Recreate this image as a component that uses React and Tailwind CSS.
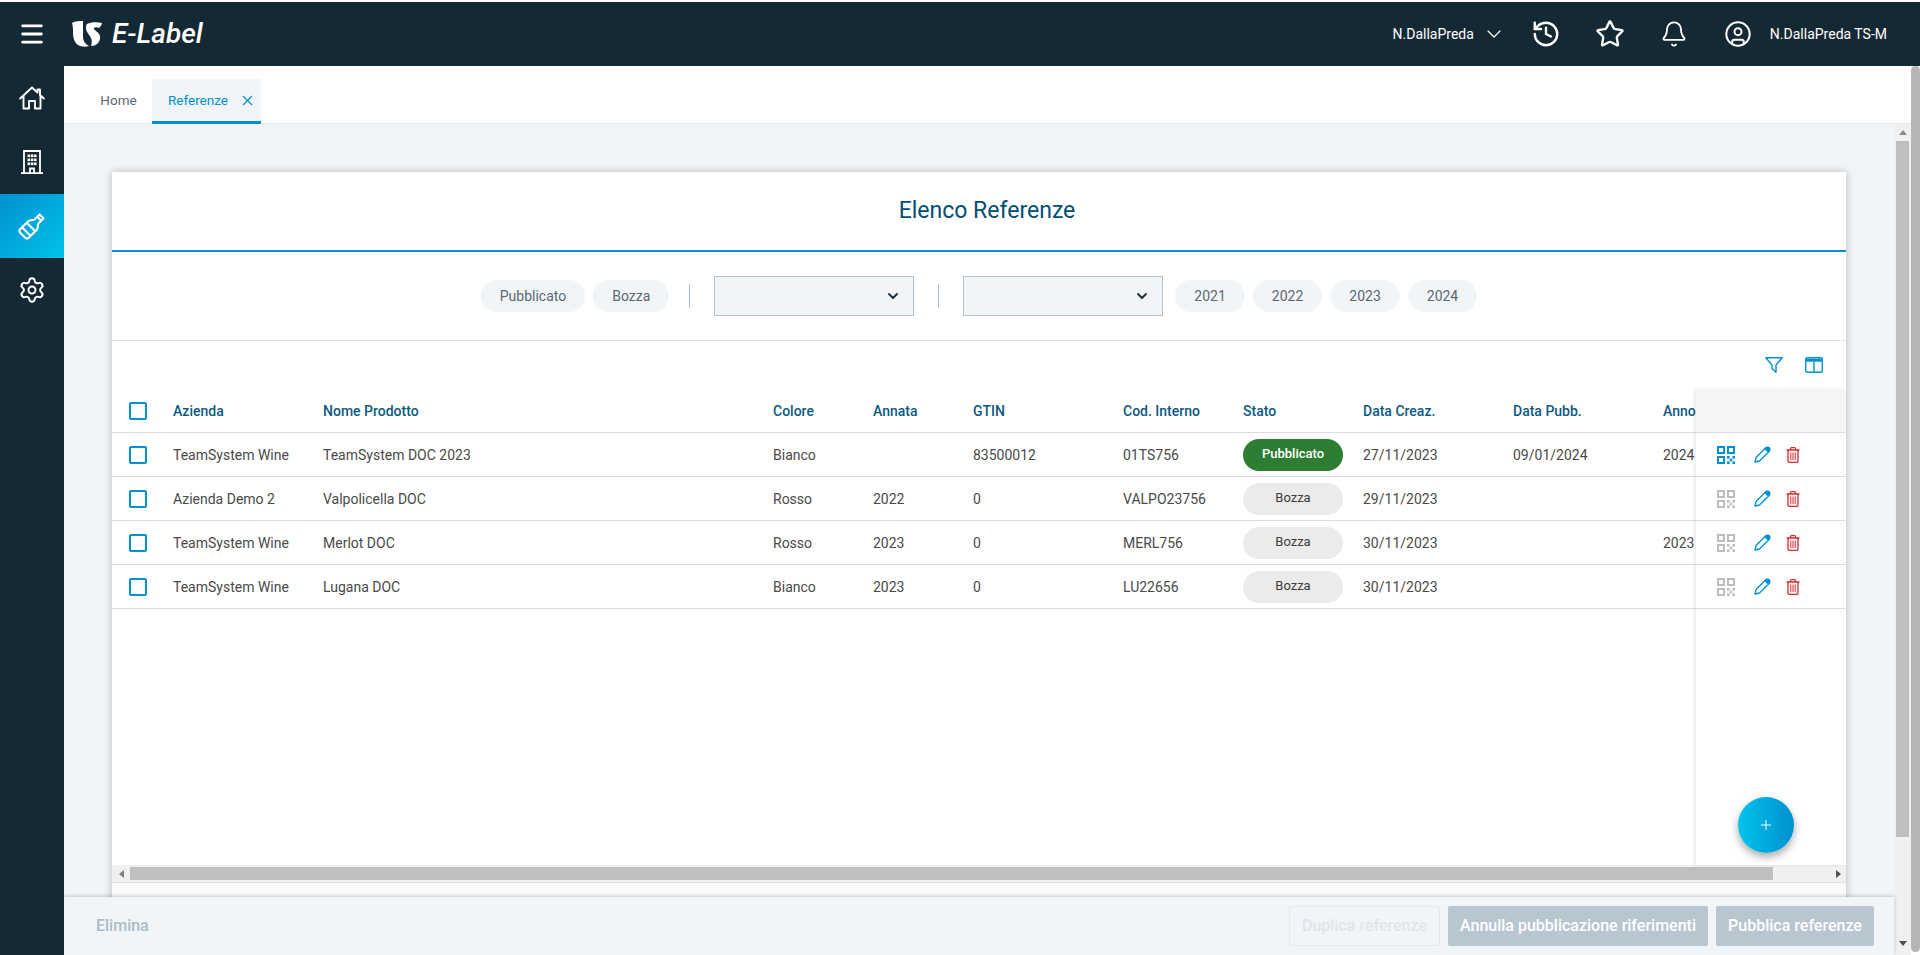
import React from "react";
import { Menu, ChevronDown, History, Star, Bell, CircleUser, X, Plus, Settings } from "lucide-react";

const F = { fontFamily: "Roboto, sans-serif" };

function Logo() {
  return (
    <svg width="30" height="26" viewBox="0 0 30 26" fill="#fff">
      <path d="M0 2 C3 0 8 0 11 0 L11 15 C11 20 13 23 17 25 C14 26 9 26 6 24 C2 21 1 16 1 11 C1 8 1 5 0 2 Z" />
      <path d="M15 3 C19 1 25 1 30 2 C30 4 28 6 27 7 C25 6 23 6 22 7 C21 9 27 11 28 15 C29 20 25 25 19 25 C20 22 20 20 19 17 C17 13 14 11 14 7 C14 5 14 4 15 3 Z" />
    </svg>
  );
}
function HomeIcon() {
  return (
    <svg width="26" height="24" viewBox="0 0 26 24" fill="none" stroke="#fff" strokeWidth="1.9" strokeLinejoin="round" strokeLinecap="round">
      <path d="M1.2 12.5 L13 1.5 L18.5 6.6 V3.5 H21 V9 L24.8 12.5" />
      <path d="M4.5 10 V22.5 H10 V15 H16 V22.5 H21.5 V10" />
    </svg>
  );
}
function BottleIcon() {
  return (
    <svg width="30" height="30" viewBox="0 0 32 32" fill="none" stroke="#fff" strokeWidth="2.2" strokeLinejoin="round">
      <g transform="rotate(45 16 16)">
        <path d="M13 1.5 H19 V9 C19 11 22.5 12 22.5 16 V27 C22.5 29 21.5 30 19.5 30 H12.5 C10.5 30 9.5 29 9.5 27 V16 C9.5 12 13 11 13 9 Z" />
        <path d="M13 5 H19 M9.5 17.5 H22.5 M9.5 24.5 H22.5" />
      </g>
    </svg>
  );
}
function OfficeIcon() {
  return (
    <svg width="22" height="24" viewBox="0 0 22 24" fill="none" stroke="#fff" strokeWidth="1.8">
      <path d="M3 23 V1 H19 V23 M0 23.1 H22" />
      <path d="M9 23 V18.5 H13 V23" />
      <g fill="#fff" stroke="none">
        <rect x="6.5" y="4.5" width="2.6" height="2.6" /><rect x="9.8" y="4.5" width="2.6" height="2.6" /><rect x="13" y="4.5" width="2.6" height="2.6" />
        <rect x="6.5" y="8.5" width="2.6" height="2.6" /><rect x="9.8" y="8.5" width="2.6" height="2.6" /><rect x="13" y="8.5" width="2.6" height="2.6" />
        <rect x="6.5" y="12.5" width="2.6" height="2.6" /><rect x="9.8" y="12.5" width="2.6" height="2.6" /><rect x="13" y="12.5" width="2.6" height="2.6" />
      </g>
    </svg>
  );
}
function QrIcon({ c }) {
  return (
    <svg width="18" height="18" viewBox="0 0 18 18" fill="none" stroke={c} strokeWidth="2">
      <rect x="1" y="1" width="6" height="6" />
      <rect x="11" y="1" width="6" height="6" />
      <rect x="1" y="11" width="6" height="6" />
      <g fill={c} stroke="none">
        <rect x="10" y="10" width="2.6" height="2.6" /><rect x="15.4" y="10" width="2.6" height="2.6" />
        <rect x="12.7" y="12.7" width="2.6" height="2.6" />
        <rect x="10" y="15.4" width="2.6" height="2.6" /><rect x="15.4" y="15.4" width="2.6" height="2.6" />
      </g>
    </svg>
  );
}
function PencilIcon() {
  return (
    <svg width="17" height="17" viewBox="0 0 17 17" fill="none" stroke="#0090d1" strokeWidth="1.3" strokeLinejoin="round">
      <path d="M1 16 L2 11.5 L11 2.5 L14.5 6 L5.5 15 Z" />
      <path d="M11.5 2 C12.5 1 14 .6 15.2 1.8 C16.4 3 16 4.5 15 5.5 L14.5 6 L11 2.5 Z" fill="#0090d1" />
    </svg>
  );
}
function TrashIcon() {
  return (
    <svg width="14" height="16" viewBox="0 0 14 16" fill="none" stroke="#d82829" strokeWidth="1.3">
      <path d="M.6 3 H13.4 M2 3 V14 C2 15 2.6 15.4 3.4 15.4 H10.6 C11.4 15.4 12 15 12 14 V3" />
      <path d="M4.5 3 V1.6 C4.5 1 5 .7 5.5 .7 H8.5 C9 .7 9.5 1 9.5 1.6 V3" />
      <path d="M4.8 5.5 V13 M7 5.5 V13 M9.2 5.5 V13" strokeWidth="1" />
    </svg>
  );
}
function ColumnsIcon() {
  return (
    <svg width="18" height="16" viewBox="0 0 18 16" fill="none" stroke="#0090d1" strokeWidth="1.4">
      <rect x=".7" y=".7" width="16.6" height="14.6" rx="1.5" />
      <path d="M.7 3.2 H17.3" strokeWidth="3" />
      <path d="M9 4 V15" />
    </svg>
  );
}
function FunnelIcon() {
  return (
    <svg width="18" height="16" viewBox="0 0 18 16" fill="none" stroke="#0090d1" strokeWidth="1.4" strokeLinejoin="round">
      <path d="M.8 .8 H17.2 L11 8 V15.2 L7 11.5 V8 Z" />
    </svg>
  );
}
function Checkbox() {
  return <div className="w-[18px] h-[18px] border-2 border-[#0090d1] rounded-[2px] bg-white" />;
}
function Chip({ children }) {
  return (
    <div className="h-8 px-[19px] rounded-full bg-[#f2f5f8] text-[#5a6872] text-sm flex items-center">{children}</div>
  );
}
function Select() {
  return (
    <div className="w-[200px] h-10 bg-[#f2f5f8] border border-[#b4c4cf] flex items-center justify-end pr-3">
      <ChevronDown size={16} strokeWidth={3} color="#22333f" />
    </div>
  );
}

const rows = [
  { a: "TeamSystem Wine", n: "TeamSystem DOC 2023", c: "Bianco", y: "", g: "83500012", i: "01TS756", s: "Pubblicato", d: "27/11/2023", p: "09/01/2024", an: "2024", qr: true },
  { a: "Azienda Demo 2", n: "Valpolicella DOC", c: "Rosso", y: "2022", g: "0", i: "VALPO23756", s: "Bozza", d: "29/11/2023", p: "", an: "" },
  { a: "TeamSystem Wine", n: "Merlot DOC", c: "Rosso", y: "2023", g: "0", i: "MERL756", s: "Bozza", d: "30/11/2023", p: "", an: "2023" },
  { a: "TeamSystem Wine", n: "Lugana DOC", c: "Bianco", y: "2023", g: "0", i: "LU22656", s: "Bozza", d: "30/11/2023", p: "", an: "" },
];

const gridCols = "grid grid-cols-[61px_150px_450px_100px_100px_150px_120px_120px_150px_150px_150px] w-[1701px] items-center";

export default function App() {
  return (
    <div style={F} className="w-[1920px] h-[955px] overflow-hidden bg-white flex flex-col pt-0.5">
      <header className="h-16 shrink-0 bg-[#152935] text-white flex items-center">
        <div className="w-16 flex justify-center"><Menu size={28} strokeWidth={2.4} /></div>
        <div className="w-[8px]" />
        <Logo />
        <span className="ml-[10px] text-[28px] font-medium italic leading-none">E-Label</span>
        <div className="flex-1" />
        <span className="text-sm">N.DallaPreda</span>
        <ChevronDown size={24} strokeWidth={1.2} className="ml-[8px]" />
        <History size={30} strokeWidth={1.9} className="ml-[25px]" />
        <Star size={30} strokeWidth={1.9} className="ml-[34px]" />
        <Bell size={28} strokeWidth={1.6} className="ml-[35px]" />
        <CircleUser size={28} strokeWidth={1.7} className="ml-[36px]" />
        <span className="text-sm ml-[18px] mr-[33px]">N.DallaPreda TS-M</span>
      </header>

      <div className="flex-1 flex min-h-0">
        <aside className="w-16 shrink-0 bg-[#152935] flex flex-col">
          <div className="h-16 flex items-center justify-center"><HomeIcon /></div>
          <div className="h-16 flex items-center justify-center"><OfficeIcon /></div>
          <div className="h-16 flex items-center justify-center bg-gradient-to-br from-[#0090d1] to-[#00c3ea]"><BottleIcon /></div>
          <div className="h-16 flex items-center justify-center"><Settings size={28} strokeWidth={1.7} color="#fff" /></div>
        </aside>

        <main className="flex-1 min-w-0 flex flex-col overflow-hidden">
          <div className="h-[58px] shrink-0 bg-white border-b border-[#e4e7ea] flex items-end pl-[21px]">
            <div className="h-[43px] mb-px w-[67px] flex items-center justify-center text-[13.5px] text-[#5a6872]">Home</div>
            <div className="h-[45px] -mb-px w-[109px] bg-[#f2f5f8] border-b-[3px] border-[#0090d1] flex items-center pl-4 text-[13.5px] text-[#0090d1]">
              Referenze
              <X size={17} strokeWidth={1.5} className="ml-[11px]" />
            </div>
          </div>

          <div className="flex-1 min-h-0 flex">
            <div className="flex-1 min-w-0 flex flex-col">
              <div className="flex-1 min-h-0 bg-[#f2f5f8] pt-[48px] pl-[48px] pr-[48px] overflow-hidden">
                <section className="bg-white h-[800px] shadow-[0_0_8px_rgba(0,0,0,0.25)]">
                  <div className="h-[80px] border-b-2 border-[#0090d1] flex items-center justify-center pl-[16px] pt-[1px]">
                    <h1 className="text-[23px] text-[#004e75]">Elenco Referenze</h1>
                  </div>
                  <div className="h-[89px] border-b border-[#e0e3e6] flex items-center justify-center">
                    <div className="flex items-center gap-2">
                      <Chip>Pubblicato</Chip>
                      <Chip>Bozza</Chip>
                    </div>
                    <div className="w-px h-6 bg-[#a9bcc7] ml-5 mr-6" />
                    <Select />
                    <div className="w-px h-6 bg-[#a9bcc7] mx-6" />
                    <Select />
                    <div className="flex items-center gap-2 ml-3">
                      <Chip>2021</Chip><Chip>2022</Chip><Chip>2023</Chip><Chip>2024</Chip>
                    </div>
                  </div>
                  <div className="h-[48px] flex items-center justify-end gap-[22px] pr-[23px]">
                    <FunnelIcon />
                    <ColumnsIcon />
                  </div>

                  <div className="flex h-[476px] relative">
                    <div className="flex-1 min-w-0 overflow-hidden text-sm">
                      <div className={`${gridCols} h-[44px] border-b border-[#dcdcdc] text-[#0d5a80] font-medium`}>
                        <div className="pl-[17px]"><Checkbox /></div>
                        <div>Azienda</div><div>Nome Prodotto</div><div>Colore</div><div>Annata</div><div>GTIN</div><div>Cod. Interno</div><div>Stato</div><div>Data Creaz.</div><div>Data Pubb.</div><div>Anno</div>
                      </div>
                      {rows.map((r, i) => (
                        <div key={i} className={`${gridCols} h-[44px] border-b border-[#dcdcdc] text-[#4a4a4a]`}>
                          <div className="pl-[17px]"><Checkbox /></div>
                          <div>{r.a}</div><div>{r.n}</div><div>{r.c}</div><div>{r.y}</div><div>{r.g}</div><div>{r.i}</div>
                          <div>
                            {r.s === "Pubblicato" ? (
                              <div className="w-[100px] h-8 rounded-full bg-[#2e7d32] text-white text-[13px] font-medium flex items-center justify-center">Pubblicato</div>
                            ) : (
                              <div className="w-[100px] h-8 rounded-full bg-[#ebebeb] text-[#3c3c3c] text-[13px] flex items-center justify-center">Bozza</div>
                            )}
                          </div>
                          <div>{r.d}</div><div>{r.p}</div><div>{r.an}</div>
                        </div>
                      ))}
                    </div>
                    <div className="w-[150px] shrink-0 bg-white shadow-[-2px_0_3px_rgba(0,0,0,0.08)] z-10">
                      <div className="h-[44px] bg-[#f5f5f5] border-b border-[#dcdcdc]" />
                      {rows.map((r, i) => (
                        <div key={i} className="h-[44px] border-b border-[#dcdcdc] flex items-center pl-[21px]">
                          <QrIcon c={r.qr ? "#0090d1" : "#bdbdbd"} />
                          <div className="ml-[19px] flex"><PencilIcon /></div>
                          <div className="ml-[15px] flex"><TrashIcon /></div>
                        </div>
                      ))}
                    </div>
                    <button className="absolute z-20 left-[1626px] top-[408px] w-14 h-14 rounded-full bg-gradient-to-r from-[#00c3ea] to-[#0090d1] shadow-[0_4px_8px_rgba(0,0,0,0.35)] flex items-center justify-center text-white">
                      <Plus size={16} strokeWidth={1.5} />
                    </button>
                  </div>
                  <div className="h-[17px] bg-[#f0f0f0] flex items-center">
                    <div className="w-[18px] flex justify-center"><div className="w-0 h-0 border-y-[4px] border-y-transparent border-r-[5px] border-r-[#7f7f7f]" /></div>
                    <div className="w-[1643px] h-[13px] bg-[#bfbfbf]" />
                    <div className="flex-1 flex justify-end pr-[5px]"><div className="w-0 h-0 border-y-[4px] border-y-transparent border-l-[5px] border-l-[#505050]" /></div>
                  </div>
                  <div className="border-t border-[#e0e0e0] h-[16px] bg-[#fafafa]" />
                </section>
              </div>
              <footer className="h-[58px] shrink-0 relative z-30 bg-[#f2f5f8] shadow-[0_-1px_4px_rgba(0,0,0,0.2)] flex items-center pl-8 pr-5">
                <span className="text-base font-medium text-[#a9bcc7]">Elimina</span>
                <div className="flex-1" />
                <button className="h-10 w-[151px] border border-[#e4e9ed] rounded-[2px] text-[#dfe5ea] text-base font-medium">Duplica referenze</button>
                <button className="h-10 w-[260px] ml-2 bg-[#b8c6cf] rounded-[2px] text-white text-base font-medium">Annulla pubblicazione riferimenti</button>
                <button className="h-10 w-[158px] ml-2 bg-[#b8c6cf] rounded-[2px] text-white text-base font-medium">Pubblica referenze</button>
              </footer>
            </div>
            <div className="w-[17px] shrink-0 bg-[#f0f0f0] flex flex-col items-center">
              <div className="h-[17px] shrink-0 flex items-center"><div className="w-0 h-0 border-x-[4px] border-x-transparent border-b-[5px] border-b-[#8a8a8a]" /></div>
              <div className="w-[13px] h-[696px] shrink-0 bg-[#bfbfbf]" />
              <div className="flex-1 flex items-end pb-[9px]"><div className="w-0 h-0 border-x-[4px] border-x-transparent border-t-[5px] border-t-[#505050]" /></div>
            </div>
          </div>
        </main>
        <div className="w-[9px] shrink-0 mb-[3px] rounded-full bg-[#b5b5b5]" />
      </div>
    </div>
  );
}
